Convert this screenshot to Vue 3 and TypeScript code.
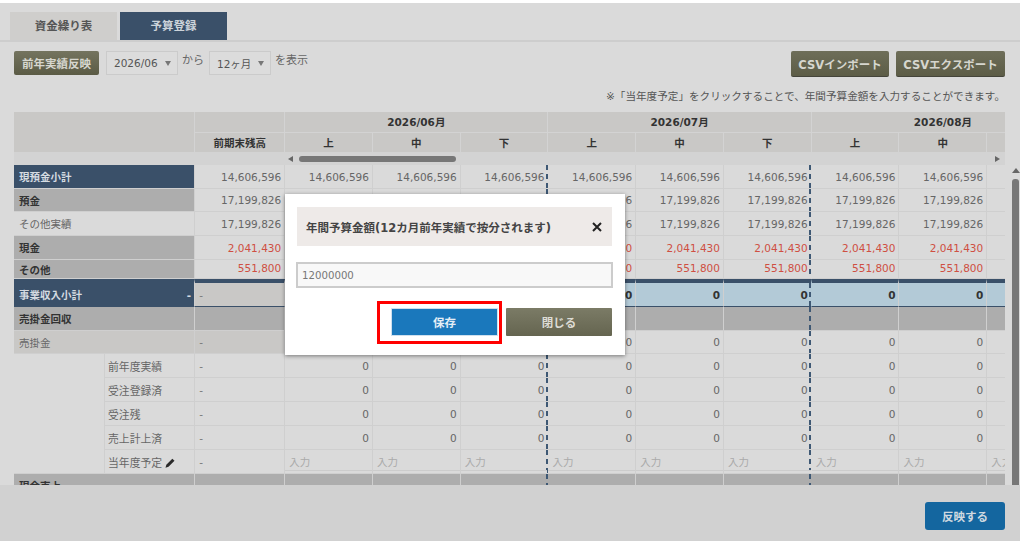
<template>
  <div class="page">
    <div class="tabs">
      <div class="tab">資金繰り表</div>
      <div class="tab active">予算登録</div>
    </div>

    <div class="toolbar">
      <button class="olive-btn reflect">前年実績反映</button>
      <span class="select start">2026/06<i class="caret"></i></span>
      <span class="label">から</span>
      <span class="select span">12ヶ月<i class="caret"></i></span>
      <span class="label">を表示</span>
      <button class="olive-btn csv first">CSVインポート</button>
      <button class="olive-btn csv">CSVエクスポート</button>
    </div>

    <p class="notice">※「当年度予定」をクリックすることで、年間予算金額を入力することができます。</p>

    <div class="main">
      <div class="table-wrap">
        <table class="grid">
          <colgroup>
            <col class="c-a" />
            <col class="c-b" />
            <col class="c-c" />
            <col v-for="n in 9" :key="n" class="c-d" />
          </colgroup>
          <thead>
            <tr class="h-month">
              <th colspan="2" rowspan="2"></th>
              <th></th>
              <th v-for="m in months" :key="m" colspan="3">{{ m }}</th>
            </tr>
            <tr class="h-part">
              <th>前期末残高</th>
              <th v-for="(p, i) in parts" :key="i">{{ p }}</th>
            </tr>
            <tr class="h-scroll">
              <td colspan="3"></td>
              <td colspan="9" class="hbar-cell">
                <div class="hbar">
                  <i class="arrow-left"></i>
                  <i class="hthumb"></i>
                  <i class="arrow-right"></i>
                </div>
              </td>
            </tr>
          </thead>
          <tbody>
            <tr v-for="row in rows" :key="row.label" :class="['row', row.kind]" :style="{ height: row.height + 'px' }">
              <td v-if="row.sub && row.first" class="blank" rowspan="5"></td>
              <td v-if="row.sub" class="name sub">
                {{ row.label }}
                <svg v-if="row.pencil" class="pencil" viewBox="0 0 12 12" width="10" height="10">
                  <path d="M8.8 .8l2.6 2.6-7.2 7.2-3.6 1 1-3.6z" fill="#2a2a2a" />
                </svg>
              </td>
              <td v-else class="name" colspan="2">
                <span>{{ row.label }}</span>
                <b v-if="row.kind === 'income'" class="dash-mark">-</b>
              </td>
              <td class="prev">{{ row.prev }}</td>
              <td
                v-for="n in 9"
                :key="n"
                class="val"
                :class="{ edge: n % 3 === 0 }"
              >{{ row.value }}</td>
            </tr>
          </tbody>
        </table>
      </div>
      <div class="vbar">
        <i class="arrow-up"></i>
        <i class="vthumb"></i>
      </div>
    </div>

    <div class="footer">
      <button class="apply">反映する</button>
    </div>

    <div class="modal">
      <div class="modal-head">
        <span>年間予算金額(12カ月前年実績で按分されます)</span>
        <svg class="close" viewBox="0 0 10 10" width="10" height="10">
          <path d="M1 1l8 8M9 1l-8 8" stroke="#222" stroke-width="2" fill="none" />
        </svg>
      </div>
      <input class="amount" value="12000000" />
      <div class="modal-actions">
        <button class="save">保存</button>
        <button class="close-btn">閉じる</button>
        <div class="highlight"></div>
      </div>
    </div>
  </div>
</template>

<script setup lang="ts">
interface Row {
  label: string
  kind: string
  height: number
  prev: string
  value: string
  sub?: boolean
  first?: boolean
  pencil?: boolean
}

const months = ['2026/06月', '2026/07月', '2026/08月']
const parts = ['上', '中', '下', '上', '中', '下', '上', '中', '下']

const rows: Row[] = [
  { label: '現預金小計', kind: 'navy', height: 24, prev: '14,606,596', value: '14,606,596' },
  { label: '預金', kind: 'gray', height: 23, prev: '17,199,826', value: '17,199,826' },
  { label: 'その他実績', kind: 'plain', height: 24, prev: '17,199,826', value: '17,199,826' },
  { label: '現金', kind: 'gray red', height: 24, prev: '2,041,430', value: '2,041,430' },
  { label: 'その他', kind: 'gray red short', height: 19, prev: '551,800', value: '551,800' },
  { label: '事業収入小計', kind: 'income', height: 28, prev: '-', value: '0' },
  { label: '売掛金回収', kind: 'section', height: 24, prev: '', value: '' },
  { label: '売掛金', kind: 'soft', height: 23, prev: '-', value: '0' },
  { label: '前年度実績', kind: 'detail', height: 24, prev: '-', value: '0', sub: true, first: true },
  { label: '受注登録済', kind: 'detail', height: 24, prev: '-', value: '0', sub: true },
  { label: '受注残', kind: 'detail', height: 24, prev: '-', value: '0', sub: true },
  { label: '売上計上済', kind: 'detail', height: 24, prev: '-', value: '0', sub: true },
  { label: '当年度予定', kind: 'detail entry', height: 24, prev: '-', value: '入力', sub: true, pencil: true },
  { label: '現金売上', kind: 'section', height: 24, prev: '', value: '' },
]
</script>

<style>
html,
body {
  background: #fff;
  overflow: hidden;
}
</style>

<style scoped>
.page {
  position: relative;
  box-sizing: border-box;
  display: flex;
  flex-direction: column;
  width: 1020px;
  height: 538px;
  margin-top: 3px;
  background: #dadada;
  font-family: "DejaVu Sans", "Noto Sans CJK JP", sans-serif;
  font-size: 10.5px;
  color: #666;
  overflow: hidden;
}

.tabs {
  display: flex;
  gap: 3px;
  height: 39px;
  box-sizing: border-box;
  padding: 9px 0 0 10px;
  border-bottom: 2px solid #cdcdcd;
}

.tab {
  width: 107px;
  height: 28px;
  line-height: 28px;
  text-align: center;
  background: #cfcecc;
  color: #555;
  font-size: 11.5px;
  font-weight: 700;
}

.tab.active {
  background: #3a5069;
  color: #ccd3da;
}

.toolbar {
  display: flex;
  align-items: flex-start;
  height: 26px;
  margin-top: 9px;
  padding: 0 15px 0 14px;
}

button {
  font-family: inherit;
  border: 0;
  padding: 0;
}

.olive-btn {
  background: linear-gradient(#74745f, #5b5b45);
  border-radius: 2px;
  color: #d6d6ce;
  font-weight: 700;
}

.reflect {
  width: 85px;
  height: 24px;
  font-size: 11.5px;
}

.csv {
  height: 26px;
  font-size: 11.5px;
  margin-left: 7px;
  border-bottom: 1px solid #44443a;
  background: linear-gradient(#6e6e59, #5c5c46);
}

.csv.first {
  width: 98px;
  margin-left: auto;
}

.csv:last-child {
  width: 109px;
}

.select {
  display: flex;
  align-items: center;
  box-sizing: border-box;
  height: 24px;
  padding-left: 7px;
  border: 1px solid #cbcbcb;
  background: #dcdcdc;
  color: #555;
  font-size: 10.5px;
}

.select.start {
  width: 72px;
  margin-left: 7px;
}

.select.span {
  width: 62px;
}

.caret {
  width: 0;
  height: 0;
  margin-left: auto;
  margin-right: 6px;
  border: 3.5px solid transparent;
  border-top: 5px solid #777;
  border-bottom: 0;
}

.label {
  margin: 0 5px 0 4px;
  line-height: 20px;
  font-size: 11px;
  color: #666;
}

.notice {
  margin: 10px 15px 0 0;
  height: 18px;
  line-height: 18px;
  text-align: right;
  color: #555;
  font-size: 10.6px;
}

.main {
  display: flex;
  height: 373px;
  margin-top: 7px;
  padding-left: 14px;
}

.table-wrap {
  width: 991px;
  height: 373px;
  overflow: hidden;
}

.grid {
  table-layout: fixed;
  width: 1061px;
  border-collapse: separate;
  border-spacing: 0;
}

.c-a {
  width: 91px;
}

.c-b {
  width: 90px;
}

.c-c {
  width: 90px;
}

.c-d {
  width: 87.7px;
}

th,
td {
  box-sizing: border-box;
  padding: 0;
  overflow: hidden;
  white-space: nowrap;
  border-right: 1px solid #cfcfcf;
  border-bottom: 1px solid #cfcfcf;
}

th {
  background: #c9c8c6;
  color: #333;
  font-size: 10.5px;
  font-weight: 700;
  text-align: center;
  border-right-color: #d3d3d3;
  border-bottom-color: #d3d3d3;
}

.h-month {
  height: 21px;
}

.h-month th {
  padding-bottom: 2px;
}

.h-part {
  height: 20px;
}

.h-scroll {
  height: 12px;
}

.h-scroll td {
  background: #d3d3d3;
  border: 0;
}

.hbar {
  display: flex;
  align-items: center;
  height: 12px;
  width: 720px;
  position: relative;
}

.arrow-left {
  width: 0;
  height: 0;
  margin-left: 3px;
  border: 3.5px solid transparent;
  border-right: 5px solid #666;
  border-left: 0;
}

.hthumb {
  width: 157px;
  height: 6px;
  margin-left: 6px;
  border-radius: 3px;
  background: #777;
}

.arrow-right {
  position: absolute;
  left: 710px;
  width: 0;
  height: 0;
  border: 3.5px solid transparent;
  border-left: 5px solid #666;
  border-right: 0;
}

.row td {
  text-align: right;
  padding-right: 3px;
  background-color: #dadada;
  color: #666;
}

.row td.name {
  text-align: left;
  padding: 0 0 0 5px;
  color: #666;
}

.row td.name.sub {
  padding-left: 3px;
  font-size: 10.8px;
}

/* month boundary, thinner than a 2px dashed border would draw */
.row td.edge {
  border-right-color: transparent;
  background-image: linear-gradient(#3e5874 55%, transparent 55%);
  background-size: 1.5px 9px;
  background-repeat: repeat-y;
  background-position: right 0;
}

.navy td.name {
  background: #3a5069;
  color: #d5dbe1;
  font-weight: 700;
}

.gray td.name {
  background: #adadad;
  color: #333;
  font-weight: 700;
}

.red td.prev,
.red td.val {
  color: #cf4f42;
}

.short td {
  vertical-align: top;
  line-height: 16px;
}

.row.short td.name {
  padding-top: 3px;
  line-height: 15px;
}

.income td {
  border-top: 4px solid #3a5069;
  border-bottom: 1px solid #3a5069;
  background-color: #b3cad7;
  color: #333;
  font-weight: 700;
}

.income td.name {
  background: #3a5069;
  color: #d5dbe1;
  font-weight: 700;
  position: relative;
}

.dash-mark {
  position: absolute;
  right: 3px;
  top: 6px;
}

.income td.prev {
  background: #c9c8c6;
  color: #777;
  font-weight: 400;
  text-align: left;
  padding-left: 4px;
}

.section td,
.section td.name {
  background-color: #adadad;
  color: #333;
  font-weight: 700;
}

.soft td.name,
.soft td.prev {
  background: #c9c8c6;
}

.soft td.prev,
.detail td.prev {
  text-align: left;
  padding-left: 4px;
  color: #777;
}

.blank {
  background: #dadada;
}

.pencil {
  vertical-align: -1px;
}

.entry td.val {
  text-align: left;
  padding-left: 4px;
  color: #aaa;
  box-shadow: inset 0 -2px 0 #dadada, inset 0 -3px 0 #cccccc;
}

.vbar {
  display: flex;
  flex-direction: column;
  align-items: center;
  align-self: flex-end;
  width: 7px;
  height: 317px;
  margin-left: 7px;
}

.arrow-up {
  width: 0;
  height: 0;
  margin-bottom: 6px;
  border: 4px solid transparent;
  border-bottom: 5px solid #666;
  border-top: 0;
}

.vthumb {
  flex: 1;
  width: 7px;
  background: #777;
  border-radius: 3px 3px 0 0;
}

.footer {
  flex: 1;
  display: flex;
  justify-content: flex-end;
  align-items: flex-start;
  padding: 17px 15px 0 0;
  background: #d1d1d1;
}

.apply {
  width: 80px;
  height: 28px;
  border-radius: 3px;
  background: #14669f;
  color: #cfd9e0;
  font-size: 11.5px;
  font-weight: 700;
}

.modal {
  position: absolute;
  left: 285px;
  top: 191px;
  box-sizing: border-box;
  width: 340px;
  height: 161px;
  padding: 13px 13px 0 11px;
  background: #fff;
  box-shadow: 0 1px 4px rgba(0, 0, 0, 0.45);
}

.modal-head {
  display: flex;
  align-items: center;
  justify-content: space-between;
  height: 39px;
  margin-left: 1px;
  padding: 0 10px 0 9px;
  background: #eeeae8;
  color: #444;
  font-size: 11.5px;
  font-weight: 700;
}

.close {
  flex: none;
}

.amount {
  display: block;
  box-sizing: border-box;
  width: 317px;
  height: 26px;
  margin-top: 16px;
  padding: 0 4px;
  border: 2px solid #ccc;
  background: #f8f8f8;
  color: #777;
  font-family: inherit;
  font-size: 10.2px;
  outline: none;
}

.modal-actions {
  position: relative;
  display: flex;
  justify-content: flex-end;
  gap: 8px;
  margin-top: 20px;
}

.save,
.close-btn {
  width: 107px;
  height: 28px;
  font-size: 11.5px;
  font-weight: 700;
  border-radius: 1px;
}

.save {
  background: #1a78bc;
  color: #e4eef6;
  border: 1px solid #cfe0ee;
}

.close-btn {
  width: 106px;
  background: linear-gradient(#7b7b66, #656550);
  color: #dddcd5;
}

.highlight {
  position: absolute;
  left: 81px;
  top: -7px;
  width: 125px;
  height: 43px;
  box-sizing: border-box;
  border: 3px solid #f00;
}
</style>
